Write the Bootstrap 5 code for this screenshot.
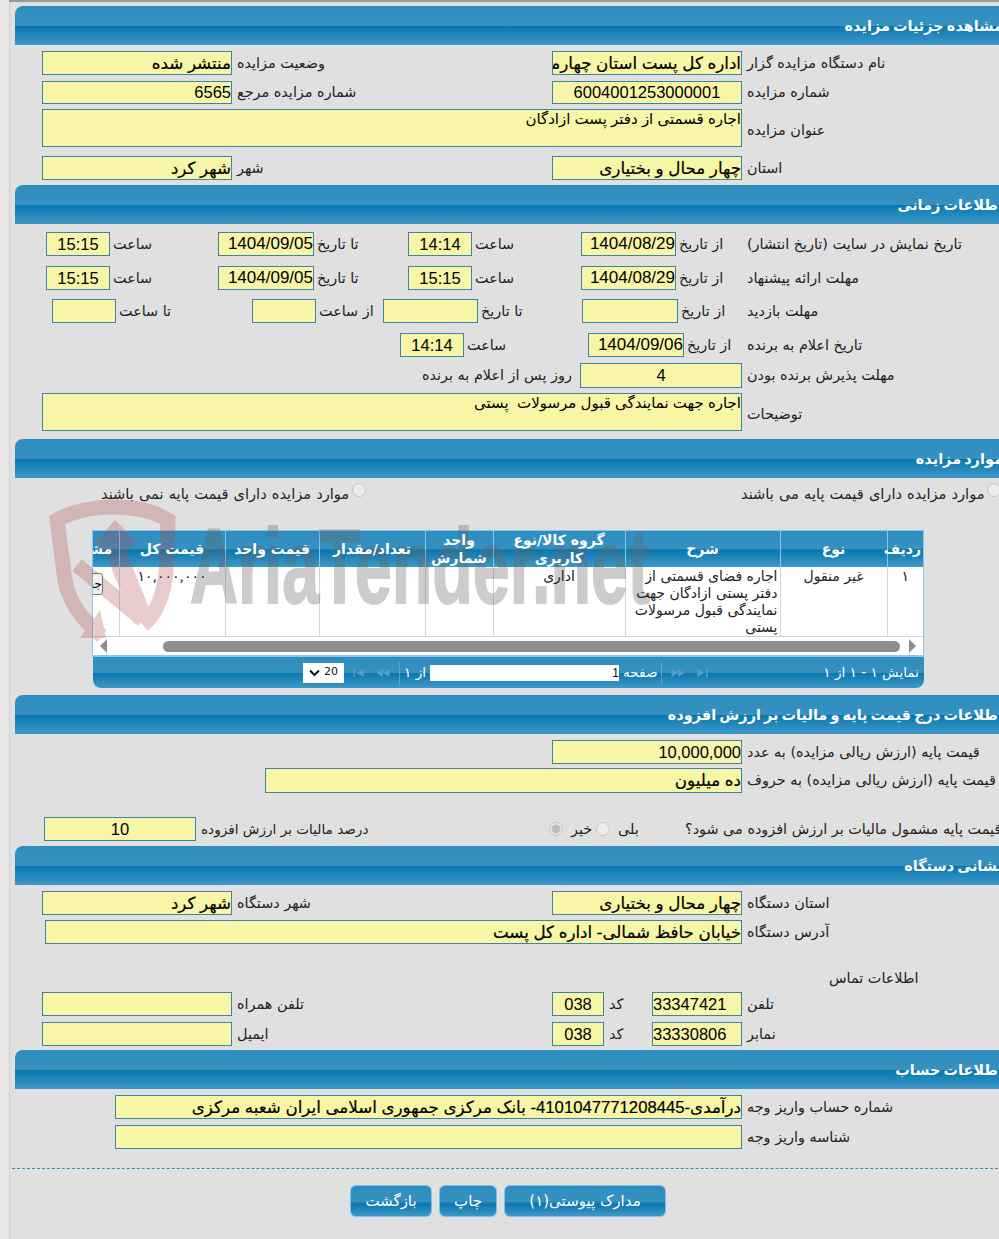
<!DOCTYPE html>
<html lang="fa" dir="ltr">
<head>
<meta charset="utf-8">
<title>مشاهده جزئیات مزایده</title>
<link href="https://cdn.jsdelivr.net/npm/bootstrap@5.3.0/dist/css/bootstrap.min.css" rel="stylesheet">
<style>
html,body{height:1239px;overflow:hidden;background:#e0e0e0}
body{font-family:Tahoma,"DejaVu Sans",sans-serif;font-size:14.4px;color:#222;position:relative;background:linear-gradient(#9a9a9a,#9a9a9a) 9px 0/100% 2px no-repeat,linear-gradient(90deg,#e6e6e6 9px,#d2d2d2 9px,#d2d2d2 10px,#e0e0e0 10px)}
.sheet{width:1003px;height:1239px;padding-top:6px}
.sec-head{margin-left:15px;height:39px;border-radius:8px 0 0 0;background:linear-gradient(#2d8dc0 0,#3791c0 50%,#0877b0 52%,#3f98c6 100%);color:#fff;font-weight:700;font-size:14.5px;word-spacing:-2px;line-height:40px;text-align:right;direction:rtl}
.frow{display:grid;align-items:center;white-space:nowrap}
.lab{direction:rtl;text-align:left;padding-left:5px;padding-top:1px}
.nopad{padding-left:0}
.pad3{padding-left:3px}
.pad8{padding-left:8px}
.low{padding-top:5px}
.narrow{font-size:13.6px}
.fld{display:block;width:100%;height:100%;min-width:0;padding:0;background:#f9f5a6;border:1px solid #3a86a8;border-radius:0;color:#000;direction:rtl;text-align:right;font-family:"Liberation Sans","DejaVu Sans",sans-serif;font-size:16.7px;-webkit-text-stroke:.2px #000;outline:0}
.num{font-size:16.5px;text-align:center;-webkit-text-stroke:0}
.endnum{text-align:right}
.dt{font-size:17px}
.lft{text-align:left}
.ta{resize:none;font-size:15px;overflow:hidden;line-height:18px;-webkit-text-stroke:0}
.two{grid-template-columns:190px 320px 190px 1fr;padding-left:42px}
.full{grid-template-columns:700px 1fr;padding-left:42px}
.t1{grid-template-columns:64px 108px 96px 94px 64px 109px 95px 71px 1fr;padding-left:46px}
.t3{grid-template-columns:64px 136px 64px 67px 95px 104px 96px 69px 1fr;padding-left:52px}
.t4{grid-template-columns:64px 124px 96px 63px 1fr;padding-left:400px}
.t5{grid-template-columns:158px 162px 1fr;padding-left:422px}
.h23{height:23px}.h24{height:24px}.h25{height:25px}.h38{height:38px}
.g3{margin-top:3px}.g4{margin-top:4px}.g5{margin-top:5px}.g6{margin-top:6px}.g7{margin-top:7px}.g8{margin-top:8px}.g9{margin-top:9px}.g10{margin-top:10px}
.rad{display:inline-block;width:14px;height:14px;border-radius:50%;background:#ececec;border:1px solid #c4c4c4;flex:none}
.rad-on{background:radial-gradient(#bdbdbd 0 4px,#ececec 5px)}
.radrow{height:18px;margin-top:5px;position:relative;direction:rtl;font-size:14.6px;word-spacing:.5px}
.rd-a{position:absolute;left:741px;top:0;display:flex;gap:3px}
.rd-b{position:absolute;left:101px;top:0;display:flex;gap:3px}
.gridbox{margin:29px 0 0 92px;width:832px;border:1px solid #8cc6e6;border-bottom:0;overflow:hidden;background:#fff;direction:rtl}
.gridbox .table{table-layout:fixed;width:872px;margin:0;--bs-table-bg:transparent;--bs-table-color:#222;font-size:14px;line-height:17px}
.gridbox th{height:36px;padding:0 2px;vertical-align:middle;text-align:center;color:#fff;font-size:14px;line-height:18px;font-weight:700;background:linear-gradient(#2d8dc0 0,#3791c0 50%,#0877b0 52%,#3f98c6 100%);border:0;border-left:1px solid #8cc6e6;box-shadow:none}
.gridbox td{height:69px;padding:1px 2px 0;vertical-align:top;text-align:center;border:0;border-left:1px solid #d4d4d4;border-bottom:1px solid #d4d4d4;overflow:hidden}
.gridbox td.desc{text-align:right;line-height:17px;white-space:normal;overflow:visible}
.upper{position:relative;z-index:2}
.c1{width:36px}.c2{width:107px}.c3{width:155px}.c4{width:132px}.c5{width:68px}.c6{width:106px}.c7{width:94px}.c8{width:106px}.c9{width:68px}
.viewbtn{display:block;margin:5px auto 0;width:36px;height:22px;padding:0;font-size:12px;line-height:20px;background:#efefef;border:1px solid #777;border-radius:3px;overflow:hidden}
.scrollbar{height:20px;display:flex;align-items:center;padding:0 7px;justify-content:space-between;border-bottom:2px solid #8cc6e6;direction:ltr}
.thumb{width:737px;height:11px;margin:0 9px 0 56px;border-radius:6px;background:#8e8e8e}
.pager{margin-left:93px;width:831px;height:31px;border-radius:0 0 8px 8px;background:linear-gradient(#2d8dc0 0,#3791c0 50%,#0877b0 52%,#3f98c6 100%);color:#fff;display:flex;align-items:center;padding:0 5px 0 210px;font-size:13.6px;white-space:nowrap}
.pg-sel{width:41px;height:20px;background:#fff;color:#111;display:flex;align-items:center;justify-content:space-between;padding:0 6px;font-size:11px}
.pg-inp{width:189px;height:16px;background:#fff;color:#111;text-align:right;font-family:"Liberation Sans",sans-serif;font-size:12px;line-height:16px}
.pg-gap{margin-left:10px}
.sep{width:1px;height:22px;background:#5aa5cc}
.rtl{direction:rtl}
.contact{height:24px;margin-top:21px;padding-left:829px;direction:rtl;text-align:left;line-height:26px}
.tel{grid-template-columns:190px 320px 52px 48px 90px 1fr;padding-left:42px}
.acc{grid-template-columns:627px 1fr;padding-left:115px}
.addr{grid-template-columns:697px 1fr;padding-left:45px}
.wide{grid-template-columns:477px 1fr;padding-left:265px}
.one{grid-template-columns:190px 1fr;padding-left:552px}
.vat{height:24px;margin-top:24px;display:grid;grid-template-columns:152px 353px 22px 25px 14px 75px 1fr;padding-left:44px;align-items:center;white-space:nowrap}
.dash{margin:19px 0 0 12px;border-top:1px dashed #3a8bb0}
.btns{margin-top:16px;padding-left:350px;display:flex;gap:7px;direction:ltr}
.btn-blue{height:32px;padding:0;font-size:15px;color:#fff;border:1px solid #7cc3ea;border-radius:6px;background:linear-gradient(#2d8dc0 0,#3791c0 50%,#0877b0 60%,#3f98c6 100%);direction:rtl}
.b1{width:82px}.b2{width:58px}.b3{width:162px}
.wm{position:absolute;left:40px;top:490px;z-index:1;pointer-events:none}
</style>
</head>
<body>
<div class="sheet">
  <div class="sec-head">مشاهده جزئیات مزایده</div>
  <div class="frow two h24 g6"><input class="fld" readonly value="منتشر شده"><span class="lab">وضعیت مزایده</span><input class="fld" readonly value="اداره کل پست استان چهارمحال و بختیاری"><span class="lab">نام دستگاه مزایده گزار</span></div>
  <div class="frow two h23 g6"><input class="fld num endnum" readonly value="6565"><span class="lab">شماره مزایده مرجع</span><input class="fld num" readonly value="6004001253000001"><span class="lab">شماره مزایده</span></div>
  <div class="frow full h38 g5"><textarea class="fld ta" readonly>اجاره قسمتی از دفتر پست ازادگان</textarea><span class="lab low">عنوان مزایده</span></div>
  <div class="frow two h24 g9"><input class="fld" readonly value="شهر کرد"><span class="lab">شهر</span><input class="fld" readonly value="چهار محال و بختیاری"><span class="lab">استان</span></div>
  <div class="sec-head g5">اطلاعات زمانی</div>
  <div class="frow t1 h24 g8"><input class="fld num" readonly value="15:15"><span class="lab pad3">ساعت</span><input class="fld num dt endnum" readonly value="1404/09/05"><span class="lab pad3">تا تاریخ</span><input class="fld num" readonly value="14:14"><span class="lab pad3">ساعت</span><input class="fld num dt endnum" readonly value="1404/08/29"><span class="lab pad3">از تاریخ</span><span class="lab nopad">تاریخ نمایش در سایت (تاریخ انتشار)</span></div>
  <div class="frow t1 h24 g10"><input class="fld num" readonly value="15:15"><span class="lab pad3">ساعت</span><input class="fld num dt endnum" readonly value="1404/09/05"><span class="lab pad3">تا تاریخ</span><input class="fld num" readonly value="15:15"><span class="lab pad3">ساعت</span><input class="fld num dt endnum" readonly value="1404/08/29"><span class="lab pad3">از تاریخ</span><span class="lab nopad">مهلت ارائه پیشنهاد</span></div>
  <div class="frow t3 h24 g9"><input class="fld num" readonly><span class="lab pad3">تا ساعت</span><input class="fld num" readonly><span class="lab pad3">از ساعت</span><input class="fld num" readonly><span class="lab pad3">تا تاریخ</span><input class="fld num" readonly><span class="lab pad3">از تاریخ</span><span class="lab nopad">مهلت بازدید</span></div>
  <div class="frow t4 h24 g10"><input class="fld num" readonly value="14:14"><span class="lab pad3">ساعت</span><input class="fld num dt endnum" readonly value="1404/09/06"><span class="lab pad3">از تاریخ</span><span class="lab nopad">تاریخ اعلام به برنده</span></div>
  <div class="frow t5 h25 g6"><span class="lab nopad">روز پس از اعلام به برنده</span><input class="fld num" readonly value="4"><span class="lab">مهلت پذیرش برنده بودن</span></div>
  <div class="frow full h38 g5"><textarea class="fld ta" readonly>اجاره جهت نمایندگی قبول مرسولات  پستی</textarea><span class="lab low">توضیحات</span></div>
  <div class="sec-head g8">موارد مزایده</div>
  <div class="radrow"><div class="rd-a"><span class="rad"></span><span>موارد مزایده دارای قیمت پایه می باشند</span></div><div class="rd-b"><span class="rad"></span><span>موارد مزایده دارای قیمت پایه نمی باشند</span></div></div>
  <div class="gridbox">
    <table class="table">
      <colgroup><col class="c1"><col class="c2"><col class="c3"><col class="c4"><col class="c5"><col class="c6"><col class="c7"><col class="c8"><col class="c9"></colgroup>
      <thead><tr><th><span class="upper">ردیف</span></th><th><span class="upper">نوع</span></th><th><span class="upper">شرح</span></th><th><span class="upper">گروه کالا/نوع کاربری</span></th><th><span class="upper">واحد شمارش</span></th><th><span class="upper">تعداد/مقدار</span></th><th><span class="upper">قیمت واحد</span></th><th><span class="upper">قیمت کل</span></th><th><span class="upper">مشاهده</span></th></tr></thead>
      <tbody><tr><td><span class="upper">۱</span></td><td><span class="upper">غیر منقول</span></td><td class="desc"><span class="upper">اجاره فضای قسمتی از دفتر پستی ازادگان جهت نمایندگی قبول مرسولات پستی</span></td><td><span class="upper">اداری</span></td><td></td><td></td><td></td><td><span class="upper">۱۰,۰۰۰,۰۰۰</span></td><td><button class="viewbtn upper" type="button">جزئیات</button></td></tr></tbody>
    </table>
    <div class="scrollbar">
      <svg width="7" height="14" viewBox="0 0 7 14"><polygon points="7,0 0,7 7,14" fill="#8e8e8e"/></svg>
      <div class="thumb"></div>
      <svg width="7" height="14" viewBox="0 0 7 14"><polygon points="0,0 7,7 0,14" fill="#8e8e8e"/></svg>
    </div>
  </div>
  <div class="pager">
    <div class="pg-sel"><svg width="11" height="8" viewBox="0 0 11 8"><path d="M1 1.5l4.5 4.5 4.5-4.5" fill="none" stroke="#111" stroke-width="2"/></svg><span>20</span></div>
    <svg class="ms-2" width="13" height="8" viewBox="0 0 13 10"><path d="M0 0h2v10H0zM13 0v10L4 5z" fill="#4f9fc8"/></svg>
    <svg class="pg-gap" width="16" height="8" viewBox="0 0 16 10"><path d="M8 0v10L0 5zM16 0v10L8 5z" fill="#4f9fc8"/></svg>
    <span class="sep ms-2"></span>
    <span class="rtl ms-1">از ۱</span>
    <div class="pg-inp ms-1">1</div>
    <span class="rtl ms-1">صفحه</span>
    <span class="sep ms-1"></span>
    <svg class="ms-2" width="16" height="8" viewBox="0 0 16 10"><path d="M0 0v10l8-5zM8 0v10l8-5z" fill="#4f9fc8"/></svg>
    <svg class="pg-gap" width="13" height="8" viewBox="0 0 13 10"><path d="M0 0v10l9-5zM11 0h2v10h-2z" fill="#4f9fc8"/></svg>
    <span class="rtl ms-auto">نمایش ۱ - ۱ از ۱</span>
  </div>
  <div class="sec-head g7">اطلاعات درج قیمت پایه و مالیات بر ارزش افزوده</div>
  <div class="frow one h24 g6"><input class="fld num endnum" readonly value="10,000,000"><span class="lab">قیمت پایه (ارزش ریالی مزایده) به عدد</span></div>
  <div class="frow wide h25 g4"><input class="fld" readonly value="ده میلیون"><span class="lab">قیمت پایه (ارزش ریالی مزایده) به حروف</span></div>
  <div class="vat"><input class="fld num h24" readonly value="10"><span class="lab narrow">درصد مالیات بر ارزش افزوده</span><span class="rad rad-on"></span><span class="lab nopad">خیر</span><span class="rad"></span><span class="lab pad8">بلی</span><span class="lab nopad">قیمت پایه مشمول مالیات بر ارزش افزوده می شود؟</span></div>
  <div class="sec-head g5">نشانی دستگاه</div>
  <div class="frow two h24 g6"><input class="fld" readonly value="شهر کرد"><span class="lab">شهر دستگاه</span><input class="fld" readonly value="چهار محال و بختیاری"><span class="lab">استان دستگاه</span></div>
  <div class="frow addr h24 g5"><input class="fld" readonly value="خیابان حافظ شمالی- اداره کل پست"><span class="lab">آدرس دستگاه</span></div>
  <div class="contact">اطلاعات تماس</div>
  <div class="frow tel h24 g3"><input class="fld" readonly><span class="lab">تلفن همراه</span><input class="fld num" readonly value="038"><span class="lab">کد</span><input class="fld num lft" readonly value="33347421"><span class="lab">تلفن</span></div>
  <div class="frow tel h24 g6"><input class="fld" readonly><span class="lab">ایمیل</span><input class="fld num" readonly value="038"><span class="lab">کد</span><input class="fld num lft" readonly value="33330806"><span class="lab">نمابر</span></div>
  <div class="sec-head g4">اطلاعات حساب</div>
  <div class="frow acc h24 g6"><input class="fld" readonly value="درآمدی-4101047771208445- بانک مرکزی جمهوری اسلامی ایران شعبه مرکزی"><span class="lab">شماره حساب واریز وجه</span></div>
  <div class="frow acc h24 g6"><input class="fld" readonly><span class="lab">شناسه واریز وجه</span></div>
  <div class="dash"></div>
  <div class="btns"><button class="btn-blue b1" type="button">بازگشت</button><button class="btn-blue b2" type="button">چاپ</button><button class="btn-blue b3" type="button">مدارک پیوستی(۱)</button></div>
</div>
<svg class="wm" width="640" height="160" viewBox="0 0 640 160">
  <g opacity=".28">
    <g fill="none" stroke="#b04a4a" stroke-width="15">
      <path d="M62 146C42 130 28 110 25 90L17 30C35 20 55 17 73 17 95 17 112 20 128 30L126 83C123 108 115 125 103 135"/>
      <path d="M37 75L103 130"/>
      <path d="M75 60L103 130" stroke-width="20"/>
    </g>
    <polygon points="75,30 97,52 75,75 55,52" fill="#b04a4a"/>
    <polygon points="40,148 66,148 60,120" fill="#b04a4a"/>
  </g>
  <text x="150" y="113" opacity=".33" font-family="'Liberation Sans',sans-serif" font-weight="700" font-size="106" textLength="460" lengthAdjust="spacingAndGlyphs" fill="#666" stroke="#666" stroke-width="2">AriaTender.net</text>
</svg>
</body>
</html>
